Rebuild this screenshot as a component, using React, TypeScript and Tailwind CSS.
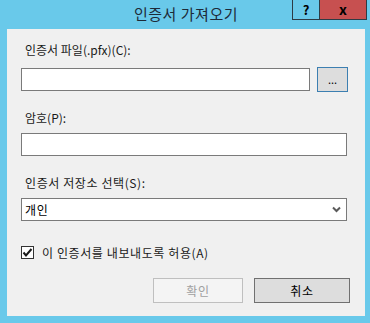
const font = { fontFamily: '"Noto Sans CJK KR", "Noto Sans", sans-serif' }

function Label({ children, wide }: { children: React.ReactNode; wide?: boolean }) {
  return (
    <div className={`h-4 text-[12px] leading-4 text-[#1a1a1a] ml-1 ${wide ? "tracking-[0.6px]" : ""}`}>
      {children}
    </div>
  )
}

export default function App() {
  return (
    <div className="w-[370px] h-[323px] bg-[#69c9ea] flex flex-col" style={font}>
      {/* title bar */}
      <div className="relative h-[29px] flex items-center justify-center">
        <span className="text-[15px] text-[#1d2a38] leading-none -mt-[2px] ml-[2px] tracking-[0.5px]">
          인증서 가져오기
        </span>
        <div className="absolute right-[3px] top-0 flex h-[20px]">
          <div className="w-[28px] h-full border border-[#2d3b45] border-t-0 flex items-center justify-center text-[13px] font-bold text-black">
            ?
          </div>
          <div className="w-[47px] h-full bg-[#c75050] border border-[#2d3b45] border-l-0 border-t-0 flex items-center justify-center text-[14px] font-bold text-black">
            x
          </div>
        </div>
      </div>

      {/* client area */}
      <div className="ml-[7px] mr-[5px] mb-[7px] flex-1 bg-[#f0f0f0] px-[14px] flex flex-col">
        <div className="mt-[13px]">
          <Label>인증서 파일(.pfx)(C):</Label>
        </div>
        <div className="mt-[9px] flex items-center">
          <div className="w-[289px] h-[23px] bg-white border border-[#7a7a7a]" />
          <div className="ml-[7px] w-[31px] h-[25px] bg-[#dddddd] border border-[#3c7fb1] flex items-center justify-center text-[11px] text-black leading-none">
            ...
          </div>
        </div>
        <div className="mt-[18px]">
          <Label>암호(P):</Label>
        </div>
        <div className="mt-[7px] w-[326px] h-[23px] bg-white border border-[#7a7a7a]" />
        <div className="mt-[19px]">
          <Label wide>인증서 저장소 선택(S):</Label>
        </div>
        <div className="mt-[7px] w-[326px] h-[23px] bg-white border border-[#7a7a7a] flex items-center justify-between pl-[3px] pr-[5px]">
          <span className="text-[12px] text-black leading-none tracking-[0.6px]">개인</span>
          <svg width="9" height="7" viewBox="0 0 9 7">
            <path d="M1 1.5 L4.5 5 L8 1.5" stroke="#5a5a5a" strokeWidth="2" fill="none" />
          </svg>
        </div>
        <div className="mt-[25px] flex items-center h-[13px]">
          <div className="w-[13px] h-[13px] bg-white border border-[#333] flex items-center justify-center">
            <svg width="11" height="11" viewBox="0 0 11 11">
              <path d="M1.5 5.5 L4 8.5 L9.5 2" stroke="#1a1a1a" strokeWidth="2" fill="none" />
            </svg>
          </div>
          <span className="ml-[8px] text-[12px] text-[#1a1a1a] leading-none tracking-[0.6px]">
            이 인증서를 내보내도록 허용(A)
          </span>
        </div>
        <div className="mt-[19px] flex justify-end pr-[1px] gap-[11px]">
          <div className="w-[90px] h-[25px] bg-[#f4f4f4] border border-[#bfbfbf] flex items-center justify-center text-[12px] text-[#a0a0a0] tracking-[0.6px]">
            확인
          </div>
          <div className="w-[96px] h-[25px] bg-[#dddddd] border border-[#707070] flex items-center justify-center text-[12px] text-black tracking-[0.6px]">
            취소
          </div>
        </div>
      </div>
    </div>
  )
}
